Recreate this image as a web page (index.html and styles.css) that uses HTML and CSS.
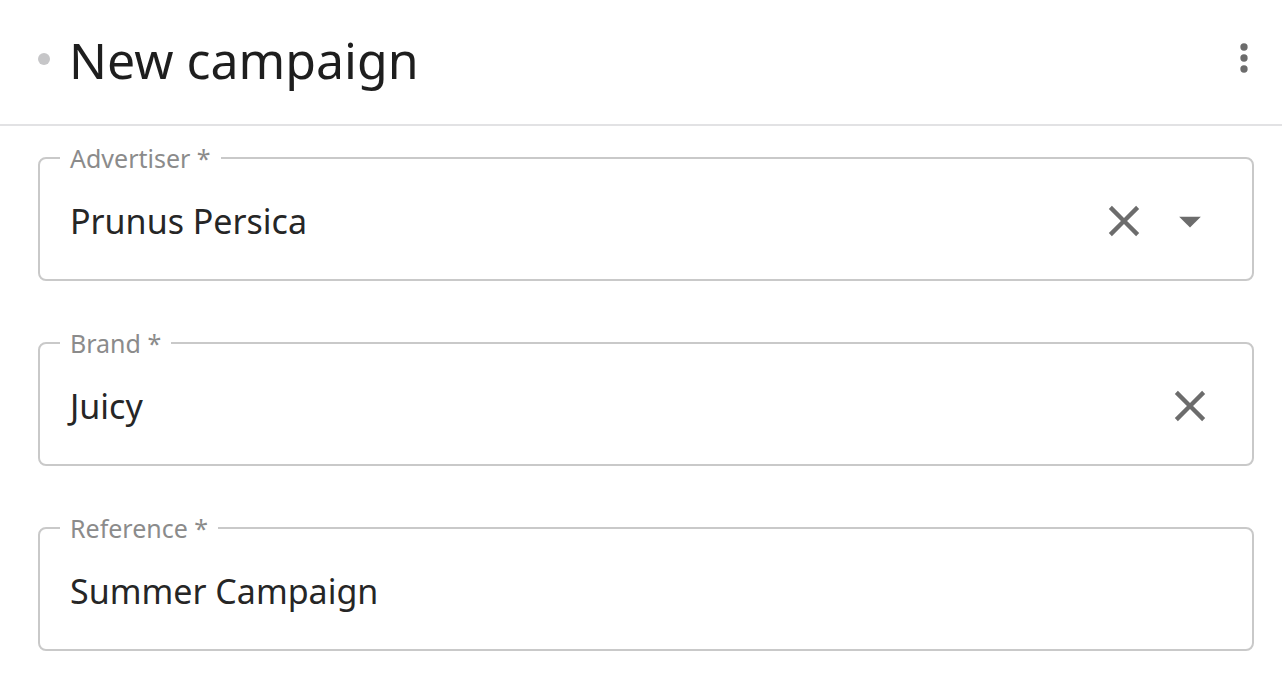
FILE: index.html
```html
<!DOCTYPE html>
<html lang="en">
<head>
<meta charset="utf-8">
<title>New campaign</title>
<link rel="stylesheet" href="styles.css">
</head>
<body>
<header class="header">
  <span class="status-dot"></span>
  <h1 class="title">New campaign</h1>
  <button class="icon-btn kebab" aria-label="More">
    <svg viewBox="0 0 24 24" width="44" height="44"><circle cx="12" cy="6" r="2"/><circle cx="12" cy="12" r="2"/><circle cx="12" cy="18" r="2"/></svg>
  </button>
</header>
<form class="form">
  <fieldset class="field">
    <legend class="field-label">Advertiser *</legend>
    <div class="field-row">
      <span class="field-value">Prunus Persica</span>
      <button type="button" class="icon-btn" aria-label="Clear">
        <svg viewBox="0 0 24 24" width="52" height="52"><path d="M19 6.41L17.59 5 12 10.59 6.41 5 5 6.41 10.59 12 5 17.59 6.41 19 12 13.41 17.59 19 19 17.59 13.41 12z"/></svg>
      </button>
      <button type="button" class="icon-btn" aria-label="Open">
        <svg viewBox="0 0 24 24" width="52" height="52"><path d="M7 10l5 5 5-5z"/></svg>
      </button>
    </div>
  </fieldset>
  <fieldset class="field">
    <legend class="field-label">Brand *</legend>
    <div class="field-row">
      <span class="field-value">Juicy</span>
      <button type="button" class="icon-btn" aria-label="Clear">
        <svg viewBox="0 0 24 24" width="52" height="52"><path d="M19 6.41L17.59 5 12 10.59 6.41 5 5 6.41 10.59 12 5 17.59 6.41 19 12 13.41 17.59 19 19 17.59 13.41 12z"/></svg>
      </button>
    </div>
  </fieldset>
  <fieldset class="field">
    <legend class="field-label">Reference *</legend>
    <div class="field-row">
      <span class="field-value">Summer Campaign</span>
    </div>
  </fieldset>
</form>
</body>
</html>
```
FILE: styles.css
```css
html, body {
  margin: 0;
  padding: 0;
  background: #ffffff;
}
body {
  font-family: "Noto Sans", "Inter", "Liberation Sans", sans-serif;
  color: #222;
}
.header {
  display: flex;
  align-items: center;
  height: 124px;
  padding: 0 16px 0 38px;
  border-bottom: 2px solid #e2e2e4;
}
.status-dot {
  width: 12px;
  height: 12px;
  border-radius: 50%;
  background: #c6c6c8;
  margin-right: 19px;
  margin-top: -6px;
}
.title {
  flex: 1;
  margin: 0;
  font-size: 50px;
  font-weight: 400;
  color: #1e1e1e;
  line-height: 1;
  margin-top: -4px;
}
.icon-btn {
  display: flex;
  align-items: center;
  justify-content: center;
  border: 0;
  padding: 0;
  background: none;
  fill: #6c6c6c;
}
.kebab {
  margin-top: -8px;
}
.form {
  padding: 20px 28px 0 38px;
}
.field {
  margin: 0 0 50px;
  border: 2px solid #c9c9c9;
  border-radius: 8px;
  padding: 0 36px 0 20px;
  min-width: 0;
}
.field-label {
  padding: 0 10px;
  font-size: 25px;
  line-height: 24px;
  color: #8b8b8b;
}
.field-row {
  display: flex;
  align-items: center;
  gap: 14px;
  height: 109px;
  padding-left: 10px;
  box-sizing: border-box;
  padding-bottom: 7px;
}
.field-value {
  flex: 1;
  font-size: 34px;
  color: #262626;
}
```
